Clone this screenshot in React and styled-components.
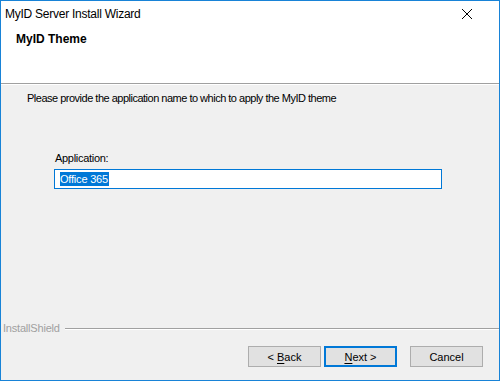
import React from 'react';
import styled, { createGlobalStyle } from 'styled-components';

const GlobalStyle = createGlobalStyle`
  html, body {
    margin: 0;
    padding: 0;
    background: #ffffff;
  }
  body {
    font-family: "Liberation Sans", Arial, sans-serif;
    font-size: 11px;
    color: #000;
  }
`;

const Window = styled.div`
  width: 500px;
  height: 381px;
  box-sizing: border-box;
  border: 1px solid #1883d7;
  display: flex;
  flex-direction: column;
  background: #f0f0f0;
  overflow: hidden;
`;

const TitleBar = styled.div`
  height: 29px;
  flex: none;
  background: #fff;
  display: flex;
  align-items: flex-start;
  justify-content: space-between;
`;

const Title = styled.div`
  padding: 5px 0 0 4px;
  line-height: 16px;
  font-size: 12px;
  letter-spacing: -0.25px;
`;

const CloseButton = styled.div`
  width: 46px;
  height: 29px;
  display: flex;
  align-items: center;
  justify-content: center;
  margin-top: -2px;
  margin-right: 9px;
`;

const Header = styled.div`
  height: 54px;
  flex: none;
  background: #fff;
  border-bottom: 1px solid #a0a0a0;
  padding: 1px 0 0 15px;
  box-sizing: border-box;
`;

const HeaderTitle = styled.div`
  font-weight: 700;
  line-height: 16px;
  font-size: 12px;
`;

const Body = styled.div`
  flex: 1;
  display: flex;
  flex-direction: column;
  border-top: 1px solid #fff;
  letter-spacing: -0.3px;
`;

const Intro = styled.div`
  padding: 5px 0 0 26px;
  line-height: 16px;
  letter-spacing: -0.5px;
`;

const Field = styled.div`
  margin: 44px 0 0 54px;
  display: flex;
  flex-direction: column;
`;

const Label = styled.label`
  line-height: 16px;
  margin-bottom: 3px;
`;

const TextBox = styled.div`
  width: 388px;
  margin-left: -1px;
  height: 20px;
  box-sizing: border-box;
  border: 1px solid #0078d7;
  background: #fff;
  display: flex;
  align-items: center;
  padding-left: 5px;
`;

const Selected = styled.span`
  background: #0078d7;
  color: #fff;
  line-height: 14px;
  padding: 0 1px 0 0;
  letter-spacing: -0.2px;
`;

const Footer = styled.div`
  margin-top: auto;
  display: flex;
  flex-direction: column;
`;

const Brand = styled.div`
  display: flex;
  align-items: center;
  gap: 5px;
  padding-left: 2px;
  color: #a0a0a0;
  line-height: 16px;
  letter-spacing: -0.2px;
`;

const Rule = styled.div`
  flex: 1;
  height: 1px;
  background: #a0a0a0;
  border-bottom: 1px solid #fff;
  margin-top: 1px;
`;

const ButtonRow = styled.div`
  display: flex;
  justify-content: flex-end;
  padding: 10px 16px 13px 0;
`;

const Button = styled.button`
  width: 73px;
  height: 21px;
  box-sizing: border-box;
  padding: 0;
  margin: 0 0 0 ${(p) => p.$gap || 0}px;
  font-family: inherit;
  font-size: 11px;
  letter-spacing: 0;
  color: #000;
  background: #e1e1e1;
  border: ${(p) => (p.$primary ? '2px solid #0078d7' : '1px solid #adadad')};
  line-height: 16px;
  text-align: center;
`;

const U = styled.span`
  text-decoration: underline;
  text-underline-offset: 2px;
`;

const CloseIcon = () => (
  <svg width="12" height="12" viewBox="0 0 12 12">
    <path d="M1 1 L11 11 M11 1 L1 11" stroke="#000" strokeWidth="1" />
  </svg>
);

export default function App() {
  return (
    <>
      <GlobalStyle />
      <Window>
        <TitleBar>
          <Title>MyID Server Install Wizard</Title>
          <CloseButton>
            <CloseIcon />
          </CloseButton>
        </TitleBar>
        <Header>
          <HeaderTitle>MyID Theme</HeaderTitle>
        </Header>
        <Body>
          <Intro>Please provide the application name to which to apply the MyID theme</Intro>
          <Field>
            <Label>Application:</Label>
            <TextBox>
              <Selected>Office 365</Selected>
            </TextBox>
          </Field>
          <Footer>
            <Brand>
              InstallShield
              <Rule />
            </Brand>
            <ButtonRow>
              <Button>
                {'< '}
                <U>B</U>ack
              </Button>
              <Button $primary $gap={3}>
                <U>N</U>
                {'ext >'}
              </Button>
              <Button $gap={13}>Cancel</Button>
            </ButtonRow>
          </Footer>
        </Body>
      </Window>
    </>
  );
}
